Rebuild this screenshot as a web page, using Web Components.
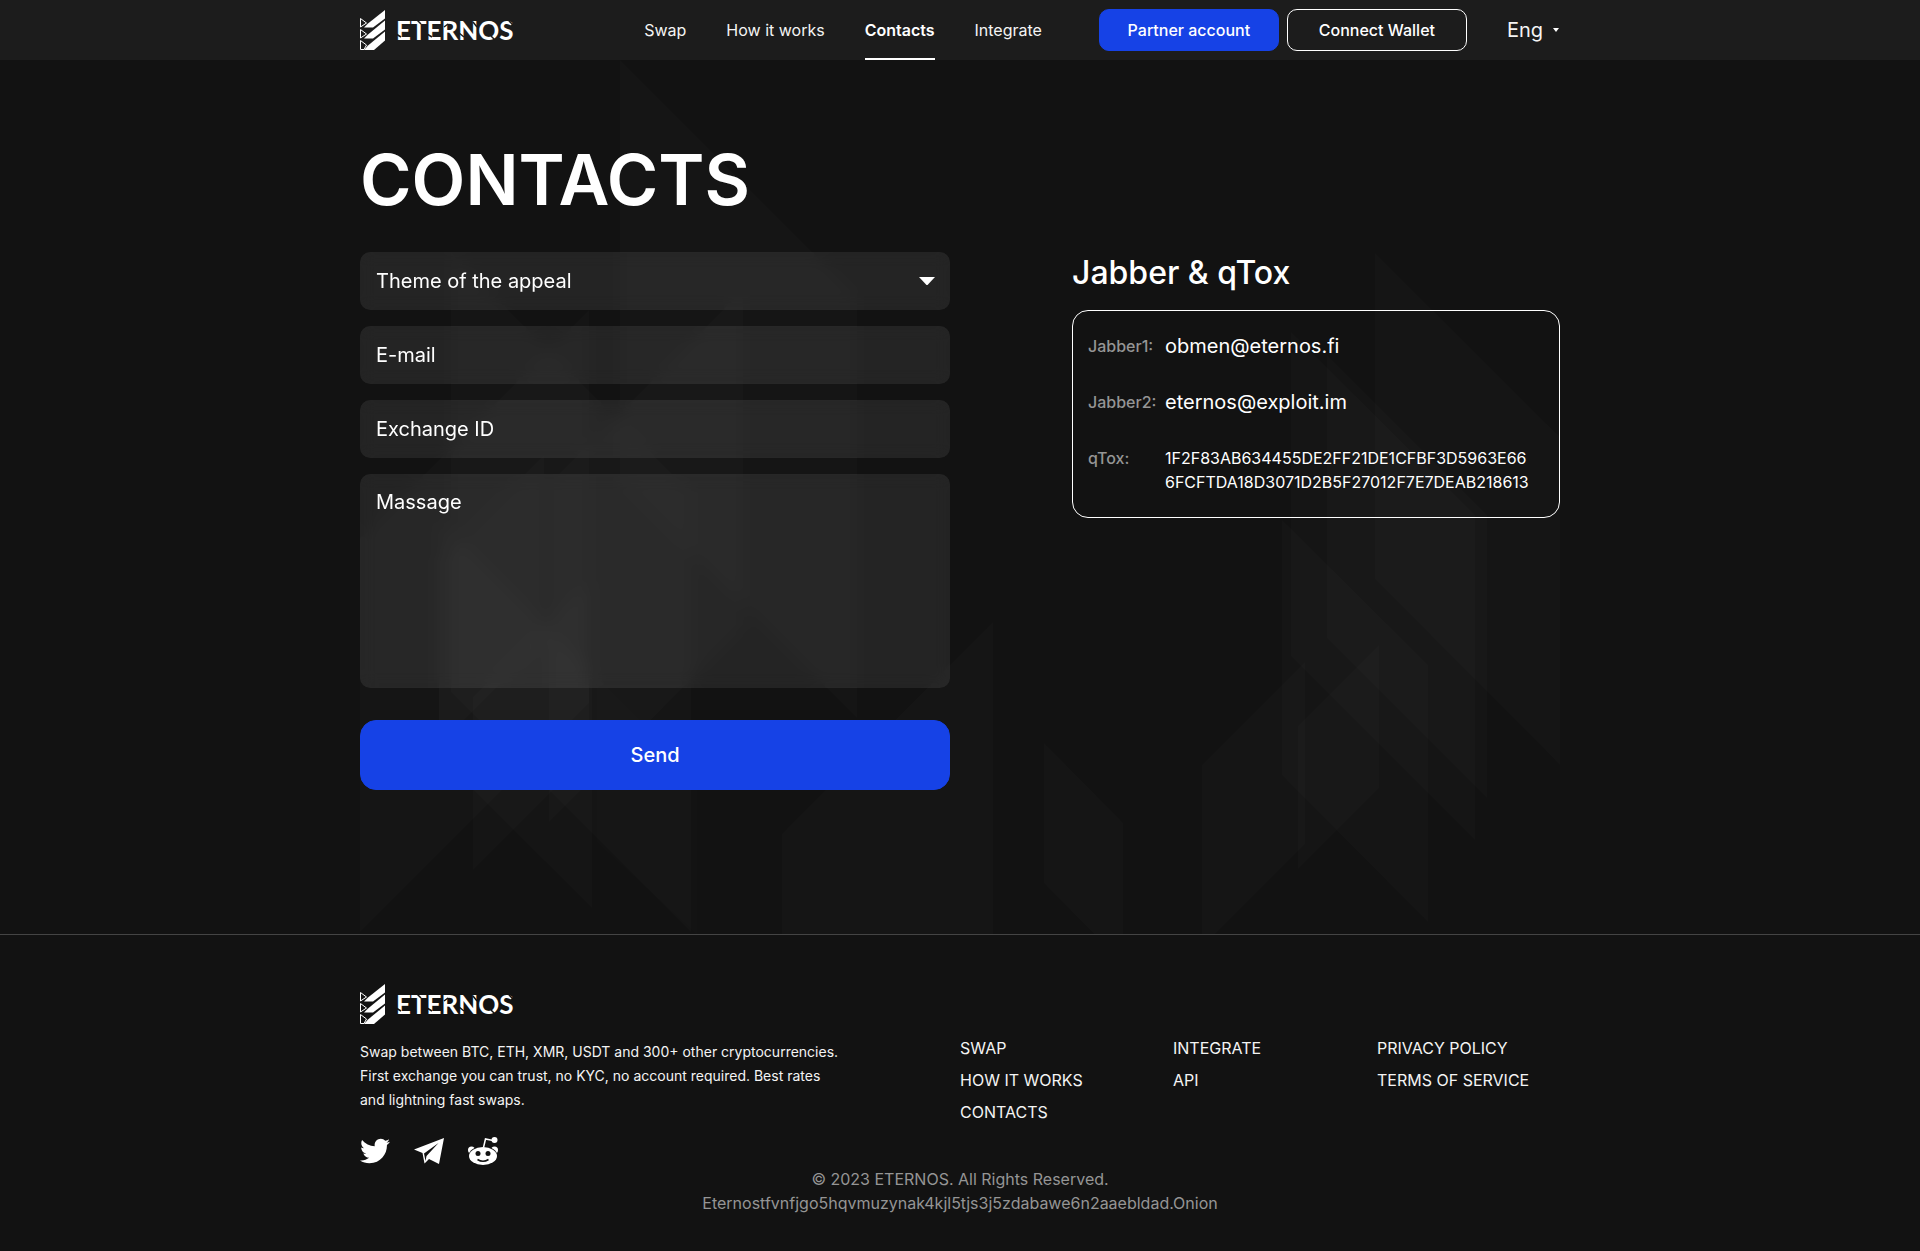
<!DOCTYPE html>
<html lang="en">
<head>
<meta charset="utf-8">
<meta name="viewport" content="width=device-width, initial-scale=1">
<title>Eternos – Contacts</title>
<style>
  :root {
    --bg: #121212;
    --bar: #1c1c1c;
    --blue: #1642e6;
    --muted: #959595;
  }
  body {
    margin: 0;
    background: var(--bg);
    color: #fff;
    font: 400 16px/24px Inter, "Liberation Sans", sans-serif;
  }
</style>
</head>
<body>
<et-page>
  <et-header slot="header">
    <et-nav-link href="#swap">Swap</et-nav-link>
    <et-nav-link href="#how">How it works</et-nav-link>
    <et-nav-link href="#contacts" current>Contacts</et-nav-link>
    <et-nav-link href="#integrate">Integrate</et-nav-link>
    <et-button slot="actions">Partner account</et-button>
    <et-button slot="actions" kind="outline">Connect Wallet</et-button>
    <et-language slot="actions"></et-language>
  </et-header>

  <et-contacts>
    <span slot="title">Contacts</span>
    <et-form slot="form">
      <et-field type="select" label="Theme of the appeal"></et-field>
      <et-field type="email" label="E-mail"></et-field>
      <et-field type="text" label="Exchange ID"></et-field>
      <et-field type="textarea" label="Massage"></et-field>
      <et-button slot="submit" kind="large">Send</et-button>
    </et-form>
    <et-card slot="aside">
      <span slot="title">Jabber &amp; qTox</span>
      <et-row label="Jabber1:" size="large">obmen@eternos.fi</et-row>
      <et-row label="Jabber2:" size="large">eternos@exploit.im</et-row>
      <et-row label="qTox:">1F2F83AB634455DE2FF21DE1CFBF3D5963E66<br>6FCFTDA18D3071D2B5F27012F7E7DEAB218613</et-row>
    </et-card>
  </et-contacts>

  <et-footer slot="footer"></et-footer>
</et-page>

<script>
const define = (name, html, setup) => {
  const template = document.createElement('template');
  template.innerHTML = html;
  customElements.define(name, class extends HTMLElement {
    constructor() {
      super();
      this.attachShadow({ mode: 'open' }).append(template.content.cloneNode(true));
    }
    connectedCallback() {
      if (setup) setup(this, this.shadowRoot);
    }
  });
};

define('et-logo', `
  <style>
    :host { display: block; }
    a { display: block; width: 160px; height: 40px; }
    svg { display: block; overflow: visible; }
    text { font: 700 26px Lato, sans-serif; fill: #fff; }
    .cut { stroke: var(--logo-bg, #121212); stroke-width: 1.500; }
  </style>
  <a href="#home" aria-label="Eternos home">
    <svg width="160" height="40" viewBox="0 0 160 40">
      <g fill="#fff">
        <path d="M25 0V8.500L13 17.500H4L8 13.500Z"/>
        <path d="M25 10.500V19.500L13 28.500H4L8 24.500Z"/>
        <path d="M25 21.500V30.500L14 40H4L8 35.500Z"/>
      </g>
      <g fill="none" stroke="#fff" stroke-width="1">
        <path d="M.5 8.500V17L6.500 13Z"/>
        <path d="M.5 19.500V28L6.500 24Z"/>
        <path d="M.5 30.500V39.500H4L6.500 35Z"/>
      </g>
      <text x="36" y="30">ETERNOS</text>
      <g class="cut">
        <path d="M36 24l5 3M57 10l4 4M67 24l5 3M84 17l4 -3M99 23l5 4M113 12l4 5M131 26l4 4M149 11l4 4"/>
      </g>
    </svg>
  </a>`);

define('et-nav-link', `
  <style>
    :host { display: block; }
    a {
      display: block; box-sizing: border-box; height: 60px; line-height: 60px;
      color: #f4f4f4; text-decoration: none; border-bottom: 2px solid transparent;
    }
    :host([current]) a { color: #fff; font-weight: 600; border-color: #fff; }
  </style>
  <a><slot></slot></a>`,
  (host, root) => { root.querySelector('a').href = host.getAttribute('href'); });

define('et-button', `
  <style>
    :host { display: block; flex: none; }
    button {
      display: block; box-sizing: border-box; width: 180px; height: 42px; padding: 0;
      border: 1px solid var(--blue); border-radius: 10px; background: var(--blue);
      color: #fff; font: inherit; font-weight: 500; cursor: pointer;
    }
    :host([kind="outline"]) button { background: none; border-color: #fff; }
    :host([kind="large"]) button { width: 100%; height: 70px; border-radius: 16px; font-size: 20px; }
  </style>
  <button type="button"><slot></slot></button>`);

define('et-language', `
  <style>
    :host { display: block; margin-left: 32px; }
    div { display: flex; align-items: center; gap: 9px; }
    select {
      appearance: none; field-sizing: content; padding: 0; border: 0; background: none;
      color: #f4f4f4; font: inherit; font-size: 20px; line-height: 24px;
    }
    option { color: #000; }
  </style>
  <div>
    <select aria-label="Language"><option>Eng</option></select>
    <svg width="8" height="4" viewBox="0 0 8 4"><path d="M1 0h6L4 4z" fill="#fff"/></svg>
  </div>`);

define('et-header', `
  <style>
    :host { display: block; background: var(--bar); --logo-bg: var(--bar); }
    header { display: flex; align-items: center; max-width: 1200px; height: 60px; margin: 0 auto; }
    nav { display: flex; gap: 40px; margin-left: auto; }
    .actions { display: flex; align-items: center; gap: 8px; margin-left: 57px; }
  </style>
  <header>
    <et-logo></et-logo>
    <nav aria-label="Main"><slot></slot></nav>
    <div class="actions"><slot name="actions"></slot></div>
  </header>`);

define('et-backdrop', `
  <style>
    :host { display: block; pointer-events: none; overflow: hidden; }
    svg { display: block; fill: #fff; fill-opacity: .016; }
    .faint { fill-opacity: .006; }
  </style>
  <svg width="1200" height="874" viewBox="360 60 1200 874" aria-hidden="true">
    <path d="M620 60L857 297V718L620 481Z"/>
    <path d="M451 253L691 493V932L451 692Z"/>
    <path d="M743 290V627L549 822V484Z"/>
    <path d="M589 310V703L360 932V539Z"/>
    <path d="M544 455V640L439 745V560Z"/>
    <path d="M439 519L592 672V908L439 756Z"/>
    <path class="faint" d="M597 677L697 777V934L597 842Z"/>
    <path d="M589 581V754L473 870V697Z"/>
    <path d="M993 622V960H782V834Z"/>
    <path d="M1044 743L1123 823V963L1044 883Z"/>
    <path d="M1305 662V844L1202 947V765Z"/>
    <path d="M1379 645V788L1298 869V726Z"/>
    <path d="M1282 520L1428 665V922L1282 775Z"/>
    <path d="M1291 332L1475 515V840L1291 656Z"/>
    <path d="M1327 355L1487 515V798L1327 638Z"/>
    <path d="M1375 253L1560 437V765L1375 579Z"/>
  </svg>`);

define('et-contacts', `
  <style>
    :host { display: block; border-bottom: 1px solid #444; }
    main { position: relative; max-width: 1200px; margin: 0 auto; padding: 76px 0 144px; box-sizing: border-box; }
    et-backdrop { position: absolute; inset: 0; }
    .content { position: relative; }
    h1 { margin: 0 0 28px; font-size: 70px; font-weight: 600; line-height: 88px; text-transform: uppercase; }
    .columns { display: flex; justify-content: space-between; align-items: flex-start; gap: 40px; }
    .form { flex: 0 1 590px; }
    .aside { flex: 0 1 488px; }
  </style>
  <main>
    <et-backdrop></et-backdrop>
    <div class="content">
      <h1><slot name="title"></slot></h1>
      <div class="columns">
        <div class="form"><slot name="form"></slot></div>
        <div class="aside"><slot name="aside"></slot></div>
      </div>
    </div>
  </main>`);

define('et-form', `
  <style>
    :host { display: block; }
    form { display: grid; gap: 16px; }
    .submit { margin-top: 16px; }
  </style>
  <form>
    <slot></slot>
    <div class="submit"><slot name="submit"></slot></div>
  </form>`);

define('et-field', `
  <style>
    :host { display: block; position: relative; }
    input, select, textarea {
      display: block; box-sizing: border-box; width: 100%; height: 58px; margin: 0; padding: 0 16px;
      border: 0; border-radius: 10px; outline: 0; appearance: none; resize: none;
      background: rgba(255, 255, 255, .08); backdrop-filter: blur(8px);
      color: #fff; font: inherit; font-size: 20px;
    }
    textarea { height: 214px; padding: 16px; }
    ::placeholder { color: #fff; opacity: 1; }
    option { color: #000; }
    svg { position: absolute; right: 15px; top: 25px; pointer-events: none; }
  </style>`,
  (host, root) => {
    const type = host.getAttribute('type');
    const label = host.getAttribute('label');
    const native = type === 'select' || type === 'textarea';
    const control = document.createElement(native ? type : 'input');
    control.setAttribute('aria-label', label);
    if (type === 'select') {
      control.append(new Option(label));
      root.append(control);
      root.append(document.createRange().createContextualFragment(
        '<svg width="16" height="8" viewBox="0 0 16 8"><path d="M0 0h16L9 7.500q-1 1-2 0z" fill="#fff"/></svg>'));
      return;
    }
    if (!native) control.type = type;
    control.placeholder = label;
    root.append(control);
  });

define('et-card', `
  <style>
    :host { display: block; }
    h2 { margin: 0 0 16px; font-size: 32px; font-weight: 500; line-height: 42px; }
    dl { display: grid; gap: 32px; margin: 0; padding: 23px 15px; border: 1px solid #fff; border-radius: 16px; }
  </style>
  <section>
    <h2><slot name="title"></slot></h2>
    <dl><slot></slot></dl>
  </section>`);

define('et-row', `
  <style>
    :host { display: flex; }
    dt { flex: 0 0 77px; color: var(--muted); font-weight: 500; }
    dd { margin: 0; }
    :host([size="large"]) dd { font-size: 20px; }
  </style>
  <dt></dt><dd><slot></slot></dd>`,
  (host, root) => { root.querySelector('dt').textContent = host.getAttribute('label'); });

define('et-social', `
  <style>
    :host { display: flex; align-items: center; gap: 24px; }
    a { display: block; width: 30px; height: 30px; }
    svg { display: block; fill: #fff; }
  </style>
  <a href="#twitter" aria-label="Twitter">
    <svg width="30" height="30" viewBox="0 0 512 512"><path d="M459.370 151.716c.325 4.548.325 9.097.325 13.645 0 138.720-105.583 298.558-298.558 298.558-59.452 0-114.680-17.219-161.137-47.106 8.447.974 16.568 1.299 25.340 1.299 49.055 0 94.213-16.568 130.274-44.832-46.132-.975-84.792-31.188-98.112-72.772 6.498.974 12.995 1.624 19.818 1.624 9.421 0 18.843-1.300 27.614-3.573-48.081-9.747-84.143-51.980-84.143-102.985v-1.299c13.969 7.797 30.214 12.670 47.431 13.319-28.264-18.843-46.781-51.005-46.781-87.391 0-19.492 5.197-37.360 14.294-52.954 51.655 63.675 129.300 105.258 216.365 109.807-1.624-7.797-2.599-15.918-2.599-24.040 0-57.828 46.782-104.934 104.934-104.934 30.213 0 57.502 12.670 76.670 33.137 23.715-4.548 46.456-13.320 66.599-25.340-7.798 24.366-24.366 44.833-46.132 57.827 21.117-2.273 41.584-8.122 60.426-16.243-14.292 20.791-32.161 39.308-52.628 54.253z"/></svg>
  </a>
  <a href="#telegram" aria-label="Telegram">
    <svg width="30" height="30" viewBox="0 0 30 30"><path d="M30 2L0 13.500L8.500 17L10.500 27.500L15 23L25 28ZM24.500 7L12.500 20L11.500 25L10 17.500Z" fill-rule="evenodd"/></svg>
  </a>
  <a href="#reddit" aria-label="Reddit">
    <svg width="30" height="30" viewBox="0 0 30 30">
      <circle cx="3.500" cy="14" r="3.500"/><circle cx="26.500" cy="14" r="3.500"/>
      <ellipse cx="15" cy="20" rx="14.500" ry="10" style="fill:var(--bg)"/>
      <ellipse cx="15" cy="20" rx="14" ry="9"/>
      <path d="M15.500 11.500L17.500 3L25 4.500" fill="none" stroke="#fff" stroke-width="1.500"/>
      <circle cx="26.500" cy="4" r="3"/>
      <g style="fill:var(--bg)"><circle cx="10" cy="17.500" r="2.500"/><circle cx="20" cy="17.500" r="2.500"/></g>
      <path d="M9.500 23.500Q15 27 20.500 23.500" fill="none" style="stroke:var(--bg)" stroke-width="1.500"/>
    </svg>
  </a>`);

define('et-footer', `
  <style>
    :host { display: block; }
    footer { max-width: 1200px; margin: 0 auto; padding: 49px 0 36px; }
    .top { display: grid; grid-template-columns: 600px 213px 204px 1fr; }
    .about p { max-width: 480px; margin: 16px 0 24px; font-size: 14px; line-height: 24px; color: #f4f4f4; }
    ul { display: grid; align-content: start; gap: 8px; margin: 0; padding: 52px 0 0; list-style: none; }
    li a { color: #f4f4f4; text-decoration: none; text-transform: uppercase; }
    .legal { margin: 1px 0 0; color: var(--muted); text-align: center; }
  </style>
  <footer>
    <div class="top">
      <div class="about">
        <et-logo></et-logo>
        <p>Swap between BTC, ETH, XMR, USDT and 300+ other cryptocurrencies. First exchange you can trust, no KYC, no account required. Best rates and lightning fast swaps.</p>
        <et-social></et-social>
      </div>
      <ul>
        <li><a href="#swap">Swap</a></li>
        <li><a href="#how">How it works</a></li>
        <li><a href="#contacts">Contacts</a></li>
      </ul>
      <ul>
        <li><a href="#integrate">Integrate</a></li>
        <li><a href="#api">API</a></li>
      </ul>
      <ul>
        <li><a href="#privacy">Privacy policy</a></li>
        <li><a href="#terms">Terms of service</a></li>
      </ul>
    </div>
    <p class="legal">© 2023 ETERNOS. All Rights Reserved.<br>Eternostfvnfjgo5hqvmuzynak4kjl5tjs3j5zdabawe6n2aaebldad.Onion</p>
  </footer>`);

define('et-page', `
  <style>:host { display: block; }</style>
  <slot name="header"></slot>
  <slot></slot>
  <slot name="footer"></slot>`);
</script>
</body>
</html>
